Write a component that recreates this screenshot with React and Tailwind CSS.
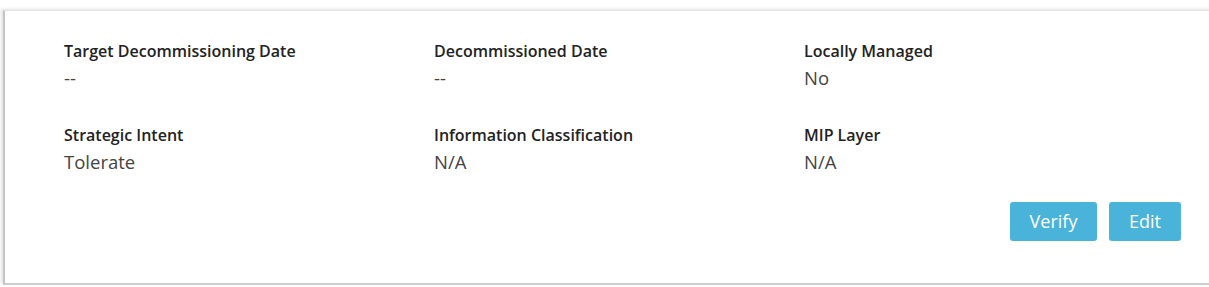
import React from "react";

const rows = [
  [
    ["Target Decommissioning Date", "--"],
    ["Decommissioned Date", "--"],
    ["Locally Managed", "No"],
  ],
  [
    ["Strategic Intent", "Tolerate"],
    ["Information Classification", "N/A"],
    ["MIP Layer", "N/A"],
  ],
];

export default function App() {
  return (
    <div className="w-[1209px] h-[287px] bg-white pt-[10px] pl-[3px] overflow-hidden" style={{ fontFamily: '"Open Sans", "Liberation Sans", sans-serif' }}>
      <div className="w-[1220px] h-[275px] bg-white border-l-2 border-t border-b-2 border-l-[#c4c4c4] border-t-[#e2e2e2] border-b-[#cfcfcf] shadow-[-2px_-1px_3px_rgba(0,0,0,0.12)] pl-[59px] pr-[42px] pt-[30px]">
        <div className="flex flex-col gap-[30px]">
          {rows.map((row, i) => (
            <div key={i} className="grid grid-cols-[370px_370px_370px]">
              {row.map(([label, value]) => (
                <div key={label} className="flex flex-col">
                  <div className="text-[16px] leading-[20px] font-semibold text-[#222]">{label}</div>
                  <div className="text-[18.5px] leading-[34px] h-[34px] text-[#444]">{value}</div>
                </div>
              ))}
            </div>
          ))}
        </div>
        <div className="flex justify-end gap-[12px] mt-[23px]">
          <button className="w-[87px] h-[39px] rounded-[3px] bg-[#4ab3d9] text-white text-[18px]">Verify</button>
          <button className="w-[72px] h-[39px] rounded-[3px] bg-[#4ab3d9] text-white text-[18px]">Edit</button>
        </div>
      </div>
    </div>
  );
}
